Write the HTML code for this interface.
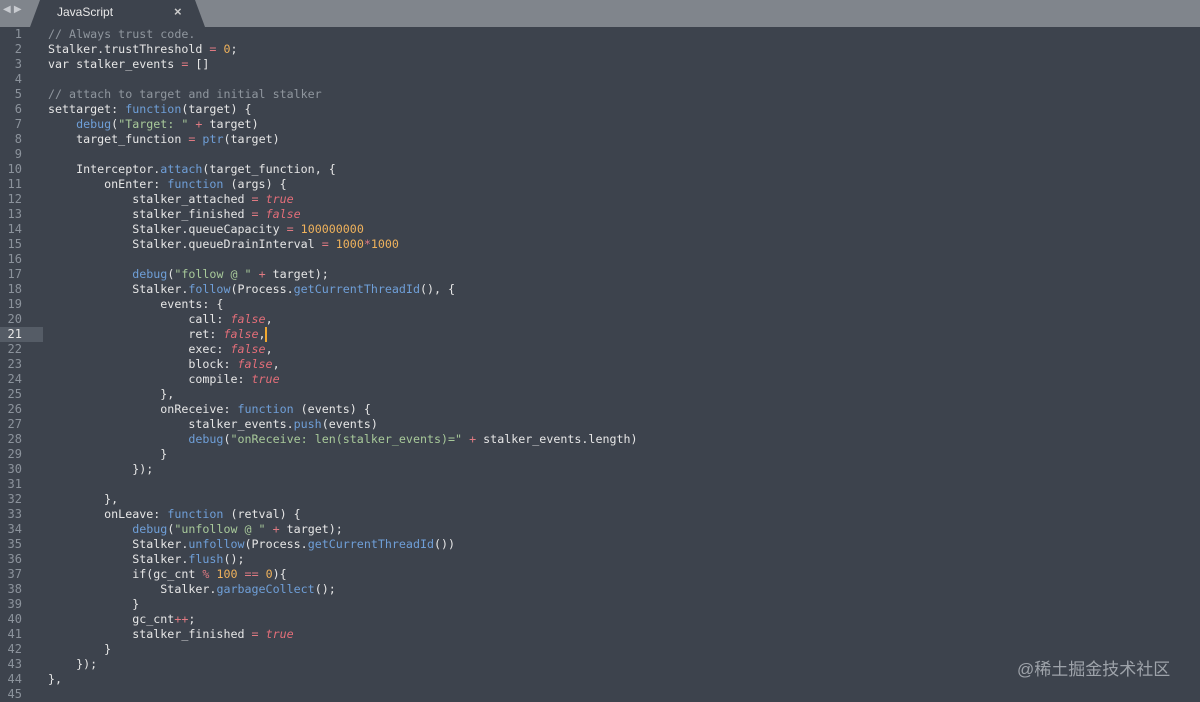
<!DOCTYPE html><html><head><meta charset="utf-8"><style>
body{margin:0;width:1200px;height:698px;background:#3d434d;overflow:hidden;position:relative;font-family:"DejaVu Sans Mono",monospace}
.bar{position:absolute;left:0;top:0;width:1200px;height:27px;background:#80858c}
.tab{position:absolute;left:30px;top:0;width:175px;height:27px}
.tab span{position:absolute;left:27px;top:5px;font:12px "Liberation Sans",sans-serif;color:#e8e8e8}
.tab b{position:absolute;left:144px;top:4px;font:bold 13px "Liberation Sans",sans-serif;color:#ccc}
.nav{position:absolute;left:3px;top:4px;color:#c8cbd0;font-size:10px;font-family:"DejaVu Sans",sans-serif}
.ln{position:absolute;left:0;top:27px;width:42px;text-align:right;font-size:12px;line-height:15px;color:#8c939c}
.ln div{padding-right:20px}
.hl{position:absolute;left:0;top:327px;width:43px;height:15px;background:#555c66}
pre{position:absolute;left:48px;top:27px;margin:0;font-size:11.67px;line-height:15px;color:#e6e6e6;font-family:"DejaVu Sans Mono",monospace}
.c{color:#8f969e}.f{color:#6f9fd8}.s{color:#a8c99a}.n{color:#efb25c}.o{color:#e07a82}.b{color:#e36e79;font-style:italic}
.cur{display:inline-block;width:2px;height:15px;background:#f0a830;vertical-align:top;margin-left:-1px}
.wm{position:absolute;left:1017px;top:655px;font:17px "Liberation Sans","Noto Sans CJK SC",sans-serif;color:#9ea3aa}
</style></head><body>
<div class="bar"></div>
<svg class="tab" width="175" height="27" viewBox="0 0 175 27" style="position:absolute;left:30px;top:0"><path d="M0 27 L10 0 L165 0 L175 27 Z" fill="#3d434d"/></svg>
<div class="tab"><span>JavaScript</span><b>×</b></div>
<div class="nav">◀ ▶</div>
<div class="hl"></div>
<div class="ln"><div>1</div><div>2</div><div>3</div><div>4</div><div>5</div><div>6</div><div>7</div><div>8</div><div>9</div><div>10</div><div>11</div><div>12</div><div>13</div><div>14</div><div>15</div><div>16</div><div>17</div><div>18</div><div>19</div><div>20</div><div style="color:#e8e8e8">21</div><div>22</div><div>23</div><div>24</div><div>25</div><div>26</div><div>27</div><div>28</div><div>29</div><div>30</div><div>31</div><div>32</div><div>33</div><div>34</div><div>35</div><div>36</div><div>37</div><div>38</div><div>39</div><div>40</div><div>41</div><div>42</div><div>43</div><div>44</div><div>45</div></div>
<pre><span class="c">// Always trust code.</span>
Stalker.trustThreshold <span class="o">=</span> <span class="n">0</span>;
var stalker_events <span class="o">=</span> []

<span class="c">// attach to target and initial stalker</span>
settarget: <span class="f">function</span>(target) {
    <span class="f">debug</span>(<span class="s">"Target: "</span> <span class="o">+</span> target)
    target_function <span class="o">=</span> <span class="f">ptr</span>(target)

    Interceptor.<span class="f">attach</span>(target_function, {
        onEnter: <span class="f">function</span> (args) {
            stalker_attached <span class="o">=</span> <span class="b">true</span>
            stalker_finished <span class="o">=</span> <span class="b">false</span>
            Stalker.queueCapacity <span class="o">=</span> <span class="n">100000000</span>
            Stalker.queueDrainInterval <span class="o">=</span> <span class="n">1000</span><span class="o">*</span><span class="n">1000</span>

            <span class="f">debug</span>(<span class="s">"follow @ "</span> <span class="o">+</span> target);
            Stalker.<span class="f">follow</span>(Process.<span class="f">getCurrentThreadId</span>(), {
                events: {
                    call: <span class="b">false</span>,
                    ret: <span class="b">false</span>,<span class="cur"></span>
                    exec: <span class="b">false</span>,
                    block: <span class="b">false</span>,
                    compile: <span class="b">true</span>
                },
                onReceive: <span class="f">function</span> (events) {
                    stalker_events.<span class="f">push</span>(events)
                    <span class="f">debug</span>(<span class="s">"onReceive: len(stalker_events)="</span> <span class="o">+</span> stalker_events.length)
                }
            });

        },
        onLeave: <span class="f">function</span> (retval) {
            <span class="f">debug</span>(<span class="s">"unfollow @ "</span> <span class="o">+</span> target);
            Stalker.<span class="f">unfollow</span>(Process.<span class="f">getCurrentThreadId</span>())
            Stalker.<span class="f">flush</span>();
            if(gc_cnt <span class="o">%</span> <span class="n">100</span> <span class="o">==</span> <span class="n">0</span>){
                Stalker.<span class="f">garbageCollect</span>();
            }
            gc_cnt<span class="o">++</span>;
            stalker_finished <span class="o">=</span> <span class="b">true</span>
        }
    });
},
</pre>
<div class="wm">@稀土掘金技术社区</div>
</body></html>
